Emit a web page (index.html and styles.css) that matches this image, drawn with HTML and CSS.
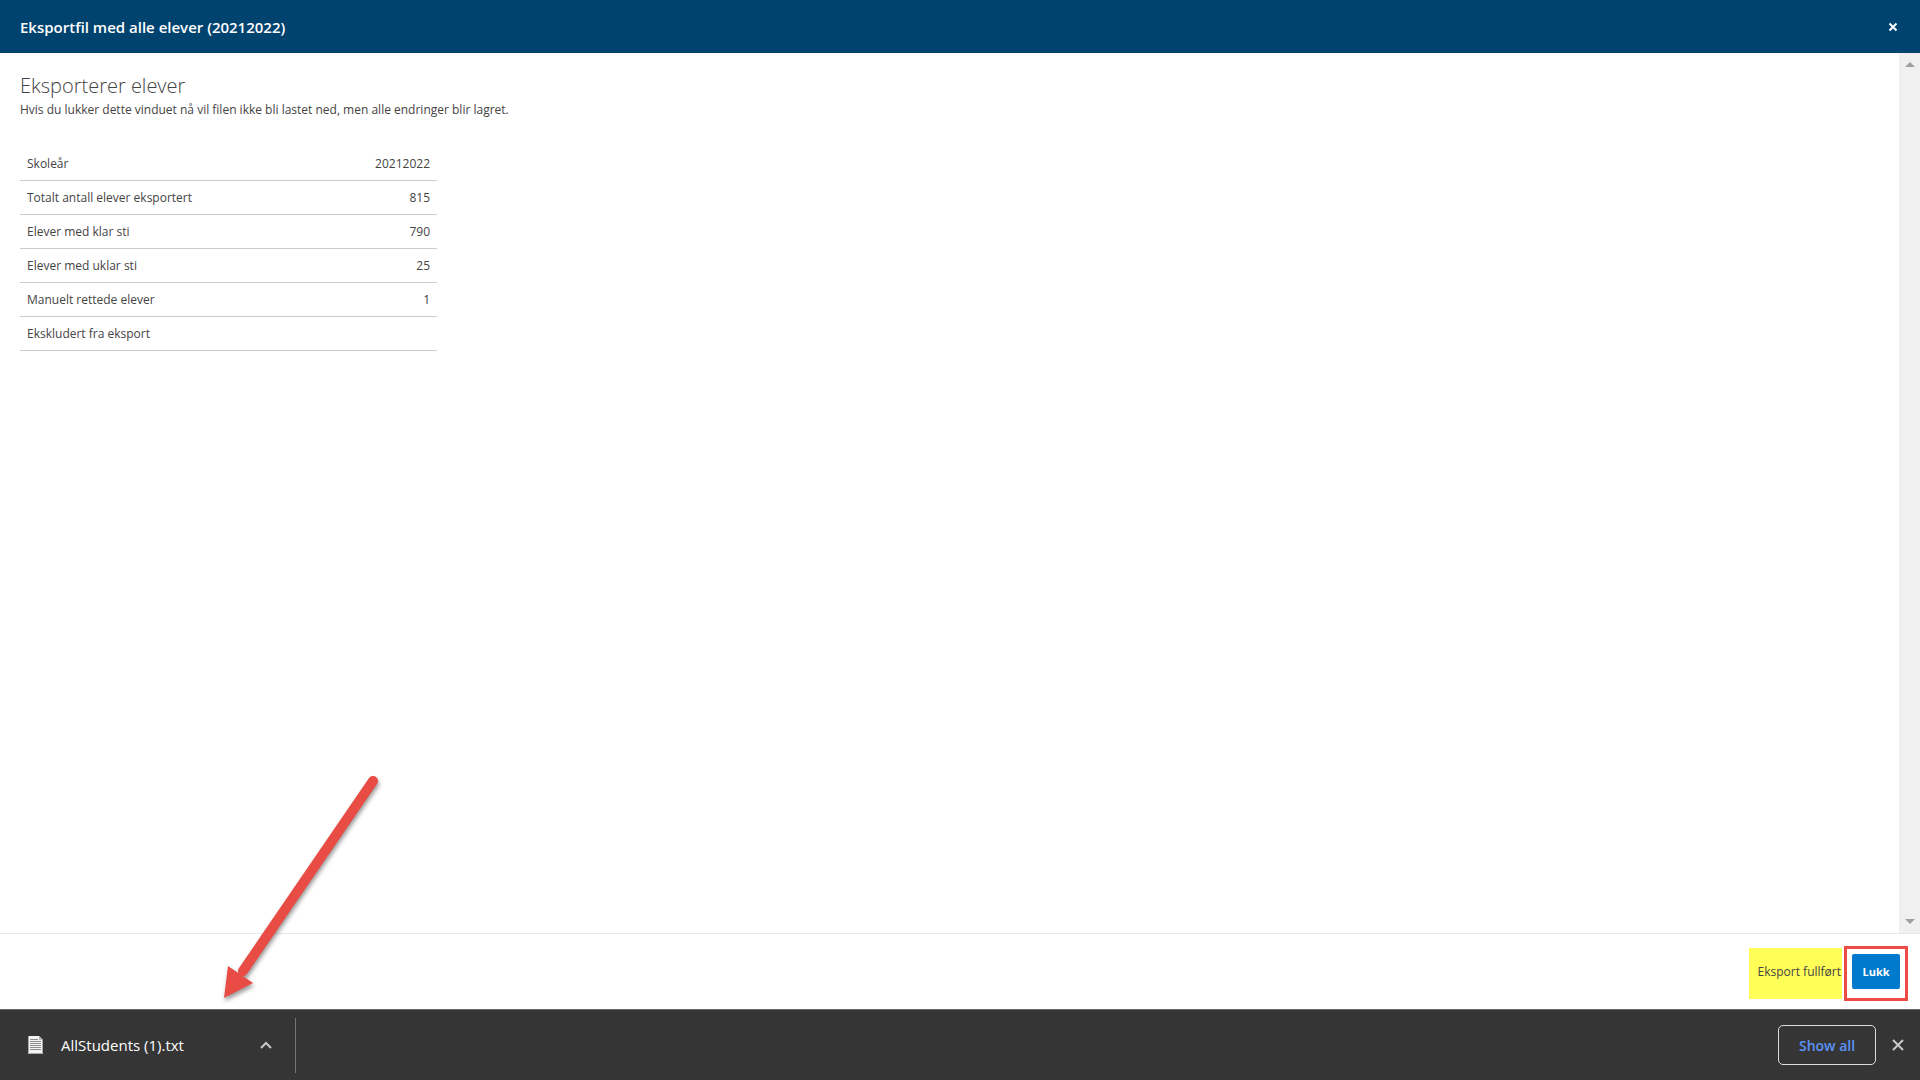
FILE: index.html
```
<!DOCTYPE html>
<html lang="nb">

<head>
  <meta charset="UTF-8">
  <meta name="viewport" content="width=device-width, initial-scale=1.0">
  <title>Eksportfil med alle elever</title>
  <link rel="stylesheet" href="styles.css">
</head>

<body>
  <header class="dialog-header">
    <h1>Eksportfil med alle elever (20212022)</h1>
    <button class="dialog-close" type="button" aria-label="Lukk vindu">
      <svg width="10" height="10" viewBox="0 0 10 10">
        <path d="M1.5 1.5l7 7M8.5 1.5l-7 7" />
      </svg>
    </button>
  </header>

  <div class="dialog-body">
    <main class="content">
      <h2>Eksporterer elever</h2>
      <p>Hvis du lukker dette vinduet nå vil filen ikke bli lastet ned, men alle endringer blir lagret.</p>

      <table class="summary">
        <tbody>
          <tr>
            <th scope="row">Skoleår</th>
            <td>20212022</td>
          </tr>
          <tr>
            <th scope="row">Totalt antall elever eksportert</th>
            <td>815</td>
          </tr>
          <tr>
            <th scope="row">Elever med klar sti</th>
            <td>790</td>
          </tr>
          <tr>
            <th scope="row">Elever med uklar sti</th>
            <td>25</td>
          </tr>
          <tr>
            <th scope="row">Manuelt rettede elever</th>
            <td>1</td>
          </tr>
          <tr>
            <th scope="row">Ekskludert fra eksport</th>
            <td></td>
          </tr>
        </tbody>
      </table>
    </main>

    <div class="scrollbar" aria-hidden="true">
      <svg width="10" height="5" viewBox="0 0 10 5">
        <path d="M0 5L5 0l5 5z" />
      </svg>
      <svg width="10" height="5" viewBox="0 0 10 5">
        <path d="M0 0l5 5 5-5z" />
      </svg>
    </div>
  </div>

  <footer class="dialog-footer">
    <span class="status">Eksport fullført</span>
    <div class="highlight">
      <button class="btn-close" type="button">Lukk</button>
    </div>
  </footer>

  <div class="downloads">
    <div class="download-item">
      <svg class="file-icon" width="15" height="18" viewBox="0 0 15 18">
        <path fill="#f4f4f4" d="M0 0h11l4 4v14H0z" />
        <path fill="#b5b5b5" d="M11 0v4h4z" />
        <path fill="none" stroke="#8c8c8c" d="M2 3.5h8M2 5.5h11M2 7.5h11M2 9.5h11M2 11.5h11M2 13.5h11" />
        <path fill="none" stroke="#a8a8a8" d="M.5 0v17.5h14V4" />
      </svg>
      <span class="file-name">AllStudents (1).txt</span>
      <button class="file-menu" type="button" aria-label="File menu">
        <svg width="12" height="8" viewBox="0 0 12 8">
          <path d="M1 7l5-5 5 5" />
        </svg>
      </button>
    </div>
    <button class="show-all" type="button">Show all</button>
    <button class="downloads-close" type="button" aria-label="Close">
      <svg width="12" height="12" viewBox="0 0 12 12">
        <path d="M1 1l10 10M11 1L1 11" />
      </svg>
    </button>
  </div>

  <!-- arrow pointing at the downloaded file -->
  <svg class="arrow" width="180" height="240" viewBox="0 0 180 240" aria-hidden="true">
    <path class="shaft" d="M163 16L33 206" />
    <path class="head" d="M18 201l25 17-29 15z" />
  </svg>
</body>

</html>
```

FILE: styles.css
```
* {
  box-sizing: border-box;
}

body {
  font-family: 'Open Sans', 'Noto Sans', sans-serif;
  font-size: 12px;
  color: #444;
  background-color: #fff;
  margin: 0;
  min-height: 100vh;
  display: flex;
  flex-direction: column;
  position: relative;
}

button {
  font-family: inherit;
  border: none;
  background: none;
  padding: 0;
  cursor: pointer;
}

svg {
  display: block;
}

/* Header */
.dialog-header {
  display: flex;
  align-items: center;
  justify-content: space-between;
  height: 53px;
  padding: 0 22px 0 20px;
  background-color: #00436f;
  color: #fff;
}

.dialog-header h1 {
  margin: 0;
  font-size: 15px;
  font-weight: 600;
}

.dialog-close path {
  stroke: #fff;
  stroke-width: 2;
}

/* Content */
.dialog-body {
  flex: 1;
  display: flex;
}

.content {
  flex: 1;
  padding: 20px;
}

.content h2 {
  margin: 0;
  font-size: 20px;
  font-weight: 300;
  line-height: 26px;
}

.content p {
  margin: 0 0 26px;
  line-height: 22px;
}

.summary {
  width: 417px;
  border-collapse: separate;
  border-spacing: 0;
}

.summary th,
.summary td {
  height: 34px;
  padding: 0 7px;
  border-bottom: 1px solid #ccc;
  font-weight: 400;
  text-align: left;
}

.summary td {
  text-align: right;
}

.scrollbar {
  width: 21px;
  padding: 9px 5px;
  display: flex;
  flex-direction: column;
  justify-content: space-between;
  align-items: center;
  background-color: #f0f0f0;
}

.scrollbar path {
  fill: #a0a0a0;
}

/* Footer */
.dialog-footer {
  display: flex;
  justify-content: flex-end;
  align-items: center;
  gap: 2px;
  height: 76px;
  padding: 4px 12px 0 0;
  border-top: 1px solid #e8e8e8;
}

.status {
  height: 51px;
  padding: 0 1px 0 9px;
  line-height: 48px;
  background-color: #ffff57;
}

.highlight {
  padding: 5px 5px 9px;
  border: 3px solid #ef4b45;
}

.btn-close {
  display: block;
  width: 48px;
  height: 35px;
  border-radius: 2px;
  background-color: #007acc;
  color: #fff;
  font-size: 11px;
  font-weight: 700;
}

/* Download bar */
.downloads {
  display: flex;
  align-items: center;
  height: 71px;
  padding: 0 16px 0 0;
  border-top: 1px solid #666;
  background-color: #353535;
}

.download-item {
  display: flex;
  align-items: center;
  width: 296px;
  height: 55px;
  margin-right: auto;
  padding: 0 23px 0 28px;
  border-right: 1px solid #757575;
}

.file-name {
  margin-left: 18px;
  color: #fff;
  font-size: 15px;
}

.file-menu {
  margin-left: auto;
}

.file-menu path,
.downloads-close path {
  fill: none;
  stroke: #c8c8c8;
  stroke-width: 2;
}

.show-all {
  width: 98px;
  height: 40px;
  margin-right: 16px;
  border: 1px solid #dcdcdc;
  border-radius: 5px;
  color: #5c93f7;
  font-size: 14px;
  font-weight: 600;
}

.arrow {
  position: absolute;
  left: 210px;
  bottom: 75px;
  filter: drop-shadow(1px 3px 2px rgba(0, 0, 0, 0.4));
  pointer-events: none;
}

.arrow .shaft {
  stroke: #e94b45;
  stroke-width: 10;
  stroke-linecap: round;
}

.arrow .head {
  fill: #e94b45;
}
```
